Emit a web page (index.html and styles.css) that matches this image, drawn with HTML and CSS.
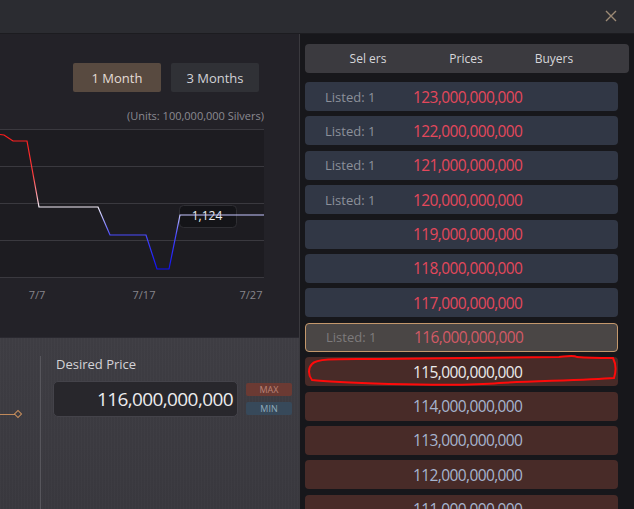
FILE: index.html
```html
<!DOCTYPE html>
<html lang="en">
<head>
    <meta charset="UTF-8">
    <meta name="viewport" content="width=device-width, initial-scale=1.0">
    <title>Market</title>
    <link rel="stylesheet" href="styles.css">
</head>
<body>
    <div class="window">
        <div class="titlebar">
            <a href="javascript:;" class="close">
                <svg width="12" height="12" viewBox="0 0 12 12"><path d="M1 1 L11 11 M11 1 L1 11" stroke="#9c8a76" stroke-width="1.4" fill="none"/></svg>
            </a>
        </div>
        <div class="main">
            <div class="left">
                <div class="chart-section">
                    <div class="tabs">
                        <a href="javascript:;" class="tab active">1 Month</a>
                        <a href="javascript:;" class="tab">3 Months</a>
                    </div>
                    <div class="units">(Units: 100,000,000 Silvers)</div>
                    <!-- price history -->
                    <svg class="chart" width="264" height="175" viewBox="0 0 264 175">
                        <defs>
                            <linearGradient id="trend" gradientUnits="userSpaceOnUse" x1="0" y1="5" x2="0" y2="140">
                                <stop offset="0" stop-color="#ff1a1a"/>
                                <stop offset="0.3" stop-color="#ff3c3c"/>
                                <stop offset="0.45" stop-color="#ff9aa4"/>
                                <stop offset="0.54" stop-color="#f6f0fa"/>
                                <stop offset="0.6" stop-color="#c4c4ff"/>
                                <stop offset="0.75" stop-color="#4848ff"/>
                                <stop offset="1" stop-color="#0f0ff5"/>
                            </linearGradient>
                        </defs>
                        <rect x="0" y="0" width="264" height="148" fill="#1d1c21"/>
                        <g stroke="#3a393f" stroke-width="1">
                            <line x1="0" y1="0.5" x2="264" y2="0.5"/>
                            <line x1="0" y1="37.5" x2="264" y2="37.5"/>
                            <line x1="0" y1="74.5" x2="264" y2="74.5"/>
                            <line x1="0" y1="111.5" x2="264" y2="111.5"/>
                            <line x1="0" y1="148.5" x2="264" y2="148.5"/>
                        </g>
                        <rect x="179.5" y="76.5" width="57" height="22" rx="4" fill="#141418" stroke="#2e2e33"/>
                        <text x="207" y="91" class="tip">1,124</text>
                        <polyline fill="none" stroke="url(#trend)" stroke-width="1.2"
                            points="0,5.5 4,6 13,12 27,12 39,78 98,78 110,106 146,106 157,140 169,140 180,86 264,86"/>
                        <text x="37" y="170" class="axis">7/7</text>
                        <text x="144" y="170" class="axis">7/17</text>
                        <text x="251" y="170" class="axis">7/27</text>
                    </svg>
                </div>
                <div class="order">
                    <div class="slider">
                        <div class="track"><span class="line"></span><span class="knob"></span></div>
                    </div>
                    <div class="price-form">
                        <div class="label">Desired Price</div>
                        <div class="price-row">
                            <div class="price-input">116,000,000,000</div>
                            <div class="quick">
                                <a href="javascript:;" class="max">MAX</a>
                                <a href="javascript:;" class="min">MIN</a>
                            </div>
                        </div>
                    </div>
                </div>
            </div>
            <div class="right">
                <div class="list-head">
                    <span class="col-sell">Sel ers</span>
                    <span class="col-price">Prices</span>
                    <span class="col-buy">Buyers</span>
                </div>
                <div class="rows">
                    <div class="row sell"><span class="listed">Listed: 1</span><span class="price">123,000,000,000</span></div>
                    <div class="row sell"><span class="listed">Listed: 1</span><span class="price">122,000,000,000</span></div>
                    <div class="row sell"><span class="listed">Listed: 1</span><span class="price">121,000,000,000</span></div>
                    <div class="row sell"><span class="listed">Listed: 1</span><span class="price">120,000,000,000</span></div>
                    <div class="row sell"><span class="listed"></span><span class="price">119,000,000,000</span></div>
                    <div class="row sell"><span class="listed"></span><span class="price">118,000,000,000</span></div>
                    <div class="row sell"><span class="listed"></span><span class="price">117,000,000,000</span></div>
                    <div class="row current"><span class="listed">Listed: 1</span><span class="price">116,000,000,000</span></div>
                    <div class="row buy marked">
                        <span class="listed"></span><span class="price">115,000,000,000</span>
                        <!-- hand drawn mark -->
                        <svg class="scribble" width="318" height="35" viewBox="0 0 318 35">
                            <path d="M10,10 C15,4 37,5 77,5 C147,4 217,4 257,3 C267,2 272,1 275,3 C287,4 302,4 311,4 C314,10 314,18 312,24 C287,26 237,27 197,29 C167,32 127,31 87,30 C57,29 27,28 10,26 C6,21 6,14 10,10 Z" fill="none" stroke="#ff0a0a" stroke-width="2"/>
                        </svg>
                    </div>
                    <div class="row buy"><span class="listed"></span><span class="price">114,000,000,000</span></div>
                    <div class="row buy"><span class="listed"></span><span class="price">113,000,000,000</span></div>
                    <div class="row buy"><span class="listed"></span><span class="price">112,000,000,000</span></div>
                    <div class="row buy"><span class="listed"></span><span class="price">111,000,000,000</span></div>
                </div>
            </div>
        </div>
    </div>
</body>
</html>
```

FILE: styles.css
```css
*{
    box-sizing: border-box;
}
html, body{
    margin: 0;
    height: 100%;
    overflow: hidden;
    background-color: #17171b;
    font-family: "Open Sans", "Noto Sans", sans-serif;
}
a{
    text-decoration: none;
}
.window{
    width: 634px;
    height: 509px;
    display: flex;
    flex-direction: column;
}
.titlebar{
    height: 34px;
    flex-shrink: 0;
    background-color: #2b2c31;
    border-bottom: 1px solid #1c1c20;
    display: flex;
    justify-content: flex-end;
    align-items: center;
    padding-right: 17px;
}
.titlebar > .close{
    display: block;
    width: 12px;
    height: 12px;
    margin-top: -1px;
}
.titlebar > .close svg{
    display: block;
}
.main{
    flex: 1;
    display: flex;
    min-height: 0;
}
.left{
    width: 300px;
    border-right: 1px solid #3a393e;
    display: flex;
    flex-direction: column;
}
.chart-section{
    height: 303px;
    background-color: #232228;
    padding-top: 29px;
}
.tabs{
    display: flex;
    gap: 10px;
    padding-left: 73px;
}
.tab{
    width: 88px;
    height: 29px;
    display: flex;
    align-items: center;
    justify-content: center;
    border-radius: 2px;
    background-color: #303136;
    color: #d2d2d6;
    font-size: 13px;
}
.tab.active{
    background-color: #584a40;
    color: #e4dcd6;
}
.units{
    width: 264px;
    margin-top: 17px;
    line-height: 14px;
    text-align: right;
    font-size: 11px;
    color: #8b8a91;
}
.chart{
    display: block;
    margin-top: 6px;
    overflow: visible;
}
.chart .tip{
    font-size: 12px;
    fill: #ececf0;
    text-anchor: middle;
    font-family: "Open Sans", sans-serif;
}
.chart .axis{
    font-size: 11px;
    fill: #86858c;
    text-anchor: middle;
    font-family: "Open Sans", sans-serif;
}
.order{
    flex: 1;
    display: flex;
    padding-top: 18px;
    border-top: 1px solid #2a2930;
    background-color: #3c3b41;
    background-image:
        repeating-linear-gradient(90deg, rgba(255,255,255,0.015) 0 1px, transparent 1px 3px),
        linear-gradient(180deg, #3e3d43, #39383e);
}
.slider{
    width: 41px;
    border-right: 1px solid #57565c;
}
.slider > .track{
    margin-top: 54px;
    height: 8px;
    display: flex;
    align-items: center;
}
.slider .line{
    width: 15px;
    height: 1px;
    background-color: #c0895a;
}
.slider .knob{
    width: 6px;
    height: 6px;
    border: 1.5px solid #c68e5c;
    transform: rotate(45deg);
}
.price-form{
    padding-left: 12px;
}
.price-form > .label{
    line-height: 16px;
    font-size: 13px;
    color: #d4d3d8;
    padding-left: 3px;
}
.price-row{
    display: flex;
    margin-top: 9px;
}
.price-input{
    width: 185px;
    height: 36px;
    border: 1px solid #44434a;
    border-radius: 5px;
    background-color: #28272c;
    color: #ececee;
    font-size: 19px;
    letter-spacing: -0.6px;
    display: flex;
    align-items: center;
    justify-content: flex-end;
    padding-right: 4px;
}
.quick{
    margin-left: 8px;
    padding-top: 2px;
    display: flex;
    flex-direction: column;
    gap: 6px;
}
.quick > a{
    width: 46px;
    height: 13px;
    display: flex;
    align-items: center;
    justify-content: center;
    font-size: 9px;
    border-radius: 2px;
}
.quick > .max{
    background-color: #6b3a33;
    color: #b98377;
}
.quick > .min{
    background-color: #37495a;
    color: #8fa9bb;
}
.right{
    flex: 1;
    padding: 10px 5px 0 5px;
    background-color: #17171b;
}
.list-head{
    height: 29px;
    border-radius: 4px;
    background-color: #3b3a3f;
    display: flex;
    align-items: center;
    font-size: 12px;
    color: #d6d6da;
}
.list-head > span{
    text-align: center;
}
.list-head > .col-sell{
    width: 126px;
}
.list-head > .col-price{
    width: 70px;
}
.list-head > .col-buy{
    width: 106px;
}
.rows{
    margin-top: 9px;
    width: 313px;
    display: flex;
    flex-direction: column;
    gap: 5.4px;
}
.row{
    height: 29px;
    flex-shrink: 0;
    border-radius: 4px;
    display: flex;
    align-items: center;
    position: relative;
}
.row > .listed{
    width: 108px;
    padding-left: 20px;
    font-size: 13px;
    color: #8c909a;
}
.row > .price{
    font-size: 15.5px;
    letter-spacing: -0.6px;
}
.row.sell{
    background-color: #313745;
}
.row.sell > .price{
    color: #e4485c;
}
.row.current{
    background-color: #4a4645;
    border: 1px solid #c4986c;
}
.row.current > .listed{
    color: #7e7b7c;
}
.row.current > .price{
    color: #d25a66;
}
.row.buy{
    background-color: #482b28;
}
.row.buy > .price{
    color: #a6b4cf;
}
.row.marked > .price{
    color: #ececec;
}
.scribble{
    position: absolute;
    left: -3px;
    top: -3px;
    overflow: visible;
}
```
